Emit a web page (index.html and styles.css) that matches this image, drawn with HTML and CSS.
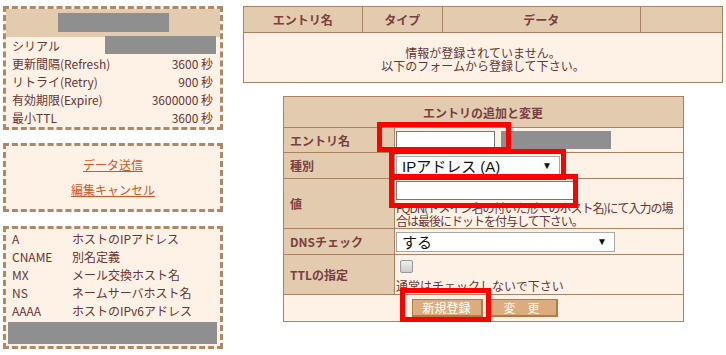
FILE: index.html
```html
<!DOCTYPE html>
<html lang="ja">
<head>
<meta charset="utf-8">
<link rel="stylesheet" href="styles.css">
</head>
<body>
<div class="page">
  <div class="side">
    <div class="box box-soa">
      <div class="soa-head"><span class="mask mask-head"></span></div>
      <div class="soa-row"><span>シリアル</span><span class="mask mask-serial"></span></div>
      <div class="soa-row"><span>更新間隔(Refresh)</span><span>3600 秒</span></div>
      <div class="soa-row"><span>リトライ(Retry)</span><span>900 秒</span></div>
      <div class="soa-row"><span>有効期限(Expire)</span><span>3600000 秒</span></div>
      <div class="soa-row"><span>最小TTL</span><span>3600 秒</span></div>
    </div>
    <div class="box box-links">
      <a href="#" class="link">データ送信</a>
      <a href="#" class="link">編集キャンセル</a>
    </div>
    <div class="box box-types">
      <div class="type-row"><span class="t">A</span><span>ホストのIPアドレス</span></div>
      <div class="type-row"><span class="t">CNAME</span><span>別名定義</span></div>
      <div class="type-row"><span class="t">MX</span><span>メール交換ホスト名</span></div>
      <div class="type-row"><span class="t">NS</span><span>ネームサーバホスト名</span></div>
      <div class="type-row"><span class="t">AAAA</span><span>ホストのIPv6アドレス</span></div>
      <div class="mask mask-types"></div>
    </div>
  </div>
  <div class="main">
    <table class="list">
      <tr class="list-head">
        <th class="c1">エントリ名</th><th class="c2">タイプ</th><th class="c3">データ</th><th class="c4"></th>
      </tr>
      <tr>
        <td colspan="4" class="empty">情報が登録されていません。<br>以下のフォームから登録して下さい。</td>
      </tr>
    </table>
    <div class="form-wrap">
      <table class="form">
        <tr><th colspan="2" class="form-title">エントリの追加と変更</th></tr>
        <tr class="r-name">
          <th>エントリ名</th>
          <td><div class="inline"><input type="text" class="in-name"><span class="mask mask-domain"></span></div></td>
        </tr>
        <tr class="r-type">
          <th>種別</th>
          <td><div class="sel sel-type"><span>IPアドレス (A)</span><span class="arrow">▼</span></div></td>
        </tr>
        <tr class="r-val">
          <th>値</th>
          <td><input type="text" class="in-val"><div class="help help-val">FQDN(ドメイン名の付いた形でのホスト名)にて入力の場合は最後にドットを付与して下さい。</div></td>
        </tr>
        <tr class="r-dns">
          <th>DNSチェック</th>
          <td><div class="sel sel-dns"><span>する</span><span class="arrow">▼</span></div></td>
        </tr>
        <tr class="r-ttl">
          <th>TTLの指定</th>
          <td><span class="chk"></span><div class="help">通常はチェックしないで下さい</div></td>
        </tr>
        <tr class="r-btn">
          <td colspan="2"><div class="btns"><span class="btn">新規登録</span><span class="btn">変　更</span></div></td>
        </tr>
      </table>
      <div class="mark mark1"></div>
      <div class="mark mark2"></div>
      <div class="mark mark3"></div>
      <div class="mark mark4"></div>
    </div>
  </div>
</div>
</body>
</html>
```
FILE: styles.css
```css
* { box-sizing: border-box; }
html, body { margin: 0; padding: 0; background: #fff; }
body {
  font-family: "Noto Sans CJK JP", "DejaVu Sans", sans-serif;
  font-size: 12px;
  color: #6b3434;
  width: 726px;
  height: 355px;
  overflow: hidden;
}
.page { display: flex; padding: 6px 0 0 3px; gap: 20px; }
.side { width: 220px; display: flex; flex-direction: column; }
.box {
  border: 3px dashed #ac8a69;
  background: #fdf2e5;
}
.box-soa { height: 124px; }
.soa-head {
  height: 28px;
  background: #e3cbb0;
  display: flex;
  justify-content: center;
  align-items: flex-start;
  padding-top: 4px;
}
.mask { background: #8f8f8f; display: block; }
.mask-head { width: 111px; height: 19px; }
.soa-row {
  height: 18px;
  line-height: 18px;
  display: flex;
  justify-content: space-between;
  padding: 0 7px 0 6px;
}
.mask-serial { width: 111px; height: 18px; margin-right: -3px; margin-top: -1px; }
.box-links {
  margin-top: 13px;
  height: 69px;
  display: flex;
  flex-direction: column;
  align-items: center;
  padding-top: 10px;
  gap: 7px;
}
.link { color: #cc5a25; text-decoration: underline; line-height: 18px; }
.box-types { margin-top: 14px; height: 123px; padding: 1px 3px 0 2px; }
.type-row { height: 18px; line-height: 18px; display: flex; padding-left: 4px; }
.type-row .t { width: 60px; }
.mask-types { height: 22px; margin-top: 2px; }

.main { width: 480px; }
table { border-collapse: collapse; }
.list { width: 480px; border: 1px solid #a88263; }
.list th, .list td { border: 1px solid #a88263; }
.list-head th { background: #e3cbb0; height: 26px; font-weight: bold; color: #7a4040; font-size: 12px; }
.c1 { width: 119px; } .c2 { width: 80px; } .c3 { width: 199px; } .c4 { width: 82px; }
.empty { background: #fdf2e5; text-align: center; height: 50px; line-height: 13px; padding-top: 3px; }

.form-wrap { position: relative; margin: 13px 0 0 40px; width: 401px; }
.form { width: 401px; border: 1px solid #a88263; }
.form th, .form td { border: 1px solid #a88263; }
.form th { background: #e3cbb0; text-align: left; padding-left: 6px; font-weight: bold; color: #7a4040; width: 111px; }
.form td { background: #fdf2e5; padding: 0 0 0 1px; vertical-align: middle; }
.form .form-title { text-align: center; height: 31px; padding-left: 0; }
.r-name th, .r-name td { height: 25px; }
.r-type th, .r-type td { height: 26px; }
.r-val th, .r-val td { height: 50px; }
.r-dns th, .r-dns td { height: 26px; }
.r-ttl th, .r-ttl td { height: 40px; }
.r-btn td { height: 27px; }
.inline { display: flex; align-items: center; gap: 6px; }
input[type=text] {
  border: 1px solid #777;
  background: #fff;
  height: 19px;
  padding: 0;
  margin: 0;
  font: inherit;
}
.in-name { width: 99px; }
.mask-domain { width: 110px; height: 18px; }
.sel {
  display: flex;
  justify-content: space-between;
  align-items: center;
  border: 1px solid #a8a8a8;
  background: #fff;
  height: 20px;
  padding: 0 7px 0 5px;
  font-family: "Liberation Sans", "Noto Sans CJK JP", sans-serif;
  font-size: 15px;
  color: #111;
}
.sel-type { width: 164px; }
.sel-dns { width: 219px; }
.arrow { font-size: 10px; color: #111; }
.in-val { width: 178px; height: 18px; margin-top: 2px; display: block; }
.help { line-height: 13px; font-size: 12px; padding-right: 4px; }
.help-val { letter-spacing: -1px; padding-right: 6px; margin-top: 1px; }
.chk {
  display: block;
  width: 13px; height: 13px;
  border: 1px solid #999;
  border-radius: 2px;
  background: linear-gradient(#eee, #ccc);
  margin: 2px 0 6px 4px;
}
.btns { display: flex; justify-content: center; gap: 4px; padding-left: 1px; }
.btn {
  display: inline-block;
  width: 71px;
  height: 18px;
  line-height: 16px;
  text-align: center;
  background: #dbad7e;
  border: 1px solid #b67a44;
  border-right-width: 2px;
  border-bottom-width: 2px;
  color: #fff;
  font-size: 12px;
}

.mark { position: absolute; border: 5px solid #ff0000; pointer-events: none; }
.mark1 { left: 94px; top: 26px; width: 134px; height: 30px; }
.mark2 { left: 106px; top: 53px; width: 177px; height: 31px; }
.mark3 { left: 106px; top: 78px; width: 189px; height: 34px; }
.mark4 { left: 117px; top: 192px; width: 91px; height: 34px; }
```
